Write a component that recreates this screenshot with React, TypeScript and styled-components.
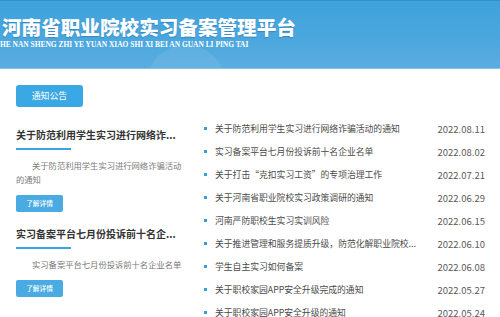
import React from "react";
import styled, { createGlobalStyle } from "styled-components";

const GlobalStyle = createGlobalStyle`
  html, body {
    margin: 0;
    padding: 0;
    background: #ffffff;
  }
  body {
    font-family: "Noto Sans CJK SC", "Microsoft YaHei", sans-serif;
    overflow: hidden;
  }
`;

const Header = styled.header`
  position: relative;
  height: 67px;
  border-top: 1px solid #2f8fd0;
  border-bottom: 1px solid #86c3ea;
  background: linear-gradient(180deg, #3fa2dc 0%, #4aa7de 55%, #5badE0 100%);
  overflow: hidden;
  box-sizing: content-box;
  &::after {
    content: "";
    position: absolute;
    left: 148px;
    top: 44px;
    width: 76px;
    height: 70px;
    border-radius: 50%;
    background: rgba(255, 255, 255, 0.08);
  }
`;

const Brand = styled.div`
  position: relative;
  z-index: 1;
  padding-top: 14px;
  color: #ffffff;
`;

const Title = styled.h1`
  margin: 0 0 0 2px;
  font-size: 19.6px;
  line-height: 24px;
  font-weight: 900;
  white-space: nowrap;
  text-shadow: 0 1px 1px rgba(20, 80, 140, 0.35);
`;

const Subtitle = styled.div`
  margin-top: 1px;
  font-family: "Liberation Serif", "Times New Roman", serif;
  font-weight: 700;
  font-size: 7.45px;
  line-height: 9px;
  white-space: nowrap;
`;

const Main = styled.main`
  padding: 16px 15px 0 16px;
`;

const TabButton = styled.div`
  width: 67px;
  height: 22px;
  border-radius: 3px;
  background: #3aa8e4;
  color: #ffffff;
  font-size: 8.9px;
  line-height: 22px;
  text-align: center;
`;

const Columns = styled.div`
  display: grid;
  grid-template-columns: 168px 1fr;
  column-gap: 19px;
`;

const Featured = styled.div`
  padding-top: 18px;
`;

const Card = styled.article`
  & + & {
    margin-top: 12px;
  }
`;

const CardTitle = styled.h3`
  margin: 0;
  font-size: 10px;
  line-height: 20px;
  font-weight: 700;
  color: #333333;
  white-space: nowrap;
`;

const TitleBar = styled.div`
  width: 55px;
  height: 2px;
  margin-top: 3px;
  background: #3aa3e0;
`;

const Summary = styled.p`
  margin: 8px 0 9px;
  font-size: 8.3px;
  line-height: 14px;
  color: #7a7a7a;
  text-indent: 16px;
`;

const MoreButton = styled.div`
  width: 47px;
  height: 17px;
  border-radius: 2px;
  background: #4aabe3;
  color: #ffffff;
  font-size: 6.7px;
  font-weight: 500;
  line-height: 17px;
  text-align: center;
`;

const NewsList = styled.ul`
  list-style: none;
  margin: 0;
  padding: 10px 0 0;
`;

const NewsItem = styled.li`
  display: flex;
  align-items: center;
  height: 23px;
  &::before {
    content: "";
    width: 3px;
    height: 3px;
    margin: 0 8px 0 1px;
    background: #3a9ddb;
    flex-shrink: 0;
  }
`;

const NewsText = styled.span`
  flex: 1;
  font-size: 8.8px;
  color: #4a4a4a;
  white-space: nowrap;
  overflow: hidden;
`;

const NewsDate = styled.span`
  font-size: 9.5px;
  color: #5a5a5a;
  white-space: nowrap;
`;

const cards = [
  {
    title: "关于防范利用学生实习进行网络诈...",
    summary: "关于防范利用学生实习进行网络诈骗活动的通知",
  },
  {
    title: "实习备案平台七月份投诉前十名企...",
    summary: "实习备案平台七月份投诉前十名企业名单",
  },
];

const news = [
  { text: "关于防范利用学生实习进行网络诈骗活动的通知", date: "2022.08.11" },
  { text: "实习备案平台七月份投诉前十名企业名单", date: "2022.08.02" },
  { text: "关于打击“克扣实习工资”的专项治理工作", date: "2022.07.21" },
  { text: "关于河南省职业院校实习政策调研的通知", date: "2022.06.29" },
  { text: "河南严防职校生实习实训风险", date: "2022.06.15" },
  { text: "关于推进管理和服务提质升级，防范化解职业院校...", date: "2022.06.10" },
  { text: "学生自主实习如何备案", date: "2022.06.08" },
  { text: "关于职校家园APP安全升级完成的通知", date: "2022.05.27" },
  { text: "关于职校家园APP安全升级的通知", date: "2022.05.24" },
];

export default function App() {
  return (
    <>
      <GlobalStyle />
      <Header>
        <Brand>
          <Title>河南省职业院校实习备案管理平台</Title>
          <Subtitle>HE NAN SHENG ZHI YE YUAN XIAO SHI XI BEI AN GUAN LI PING TAI</Subtitle>
        </Brand>
      </Header>
      <Main>
        <TabButton>通知公告</TabButton>
        <Columns>
          <Featured>
            {cards.map((c) => (
              <Card key={c.title}>
                <CardTitle>{c.title}</CardTitle>
                <TitleBar />
                <Summary>{c.summary}</Summary>
                <MoreButton>了解详情</MoreButton>
              </Card>
            ))}
          </Featured>
          <NewsList>
            {news.map((n) => (
              <NewsItem key={n.date}>
                <NewsText>{n.text}</NewsText>
                <NewsDate>{n.date}</NewsDate>
              </NewsItem>
            ))}
          </NewsList>
        </Columns>
      </Main>
    </>
  );
}
